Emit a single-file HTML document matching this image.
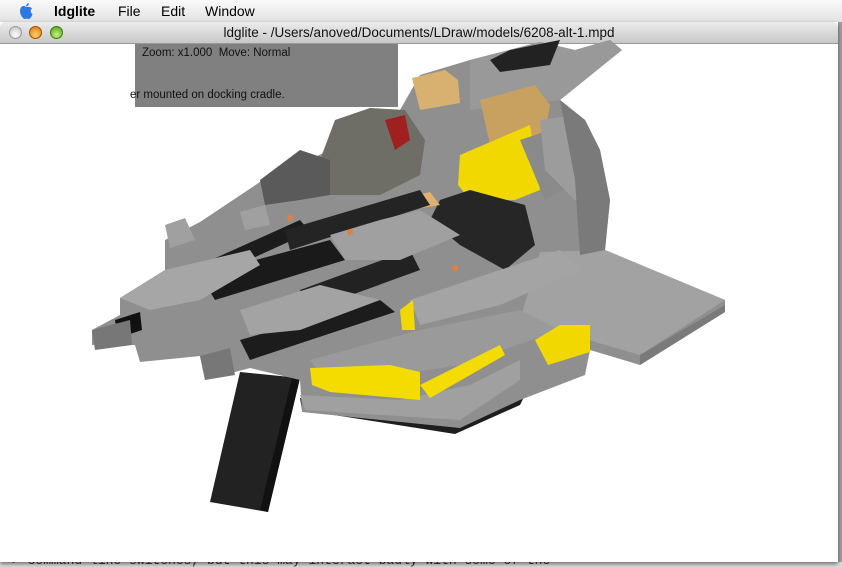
<!DOCTYPE html>
<html><head><meta charset="utf-8"><style>
body{margin:0;width:842px;height:567px;overflow:hidden;background:#d8d8d8;font-family:"Liberation Sans",sans-serif;position:relative}
#menu{position:absolute;left:0;top:0;width:842px;height:22px;background:linear-gradient(#fafafa,#e2e2e2);font-size:14px;color:#000}
#menu span{position:absolute;top:3px}
#rside{position:absolute;left:838px;top:22px;width:4px;height:545px;background:#a0a0a0}
#win{position:absolute;left:0;top:22px;width:838px;height:540px;background:#fff;box-shadow:0 2px 4px rgba(0,0,0,.5)}
#title{position:absolute;left:0;top:0;width:838px;height:21px;background:linear-gradient(#ececec,#c8c8c8);border-bottom:1px solid #999;border-radius:5px 5px 0 0;font-size:13.5px;text-align:center;line-height:22px;color:#111}
.b{position:absolute;top:4px;width:13px;height:13px;border-radius:50%}
#panel{position:absolute;left:135px;top:22px;width:263px;height:63px;background:#808080;font-size:11.5px;color:#111}
#bot{position:absolute;left:0;top:562px;width:842px;height:5px;overflow:hidden;background:#ddd}
#bot div{position:absolute;top:-9px;left:12px;font-family:"Liberation Mono",monospace;font-size:13px;color:#333}
</style></head><body>
<div id="menu">
<svg style="position:absolute;left:18px;top:2px" width="16" height="18" viewBox="0 0 16 18"><path d="M8 5C6 3 2 4 2 9c0 4 3 8 5 8 1 0 1-.5 1.5-.5S9.5 17 10.5 17c2 0 3.5-3 4-5-2-1-2.5-4-.5-5.5C13 5 11 4.5 8 5z" fill="#2a7ae2"/><path d="M8 4.5C8 3 9 1.5 11 1c0 2-1.5 3.5-3 3.5z" fill="#2a7ae2"/></svg>
<span style="left:54px;font-weight:bold">ldglite</span><span style="left:118px">File</span><span style="left:161px">Edit</span><span style="left:205px">Window</span></div>
<div id="rside"></div>
<div id="bot"><div>&gt; command line switches, but this may interact badly with some of the</div></div>
<div id="win">
<div id="title">ldglite - /Users/anoved/Documents/LDraw/models/6208-alt-1.mpd
<div class="b" style="left:9px;background:radial-gradient(circle at 50% 70%,#fff,#bbb);border:1px solid #999;width:11px;height:11px"></div>
<div class="b" style="left:29px;background:radial-gradient(circle at 50% 70%,#ffd070,#e07000);border:1px solid #a05000;width:11px;height:11px"></div>
<div class="b" style="left:50px;background:radial-gradient(circle at 50% 70%,#c8f080,#48a010);border:1px solid #3a7a10;width:11px;height:11px"></div>
</div>
<div id="panel"><div style="position:absolute;left:7px;top:3px">Zoom: x1.000 &nbsp;Move: Normal</div><div style="position:absolute;left:-5px;top:45px">er mounted on docking cradle.</div></div>
<svg style="position:absolute;left:0;top:-22px" width="842" height="567">
<polygon points="240,372 300,378 268,512 210,502" fill="#222"/>
<polygon points="292,378 300,378 268,512 260,510" fill="#111"/>
<polygon points="300,398 460,425 525,395 520,405 455,434 302,410" fill="#1e1e1e"/>
<polygon points="92,345 92,330 120,315 120,298 165,270 165,240 200,222 260,182 330,150 400,110 420,75 470,60 540,42 575,50 610,40 622,50 560,100 585,120 600,150 610,200 605,250 725,300 725,312 640,365 590,350 585,375 520,400 460,428 302,412 300,380 250,368 205,380 200,356 140,362 135,345" fill="#8f8f8f"/>
<polygon points="540,252 605,250 725,300 640,355 520,320" fill="#a2a2a2"/>
<polygon points="640,355 725,305 725,312 640,365" fill="#7a7a7a"/>
<polygon points="470,60 540,42 575,50 610,40 622,50 560,100 470,110" fill="#999"/>
<polygon points="490,60 510,50 560,40 550,65 500,72" fill="#222"/>
<polygon points="412,78 445,70 458,80 460,103 420,110" fill="#d8b070"/>
<polygon points="480,100 535,85 550,105 545,135 490,145" fill="#c8a060"/>
<polygon points="335,120 370,108 405,110 425,140 420,175 380,195 330,195 320,160" fill="#6e6e66"/>
<polygon points="385,120 405,115 410,140 395,150" fill="#a02020"/>
<polygon points="260,180 300,150 330,160 330,195 300,200 265,205" fill="#5a5a5a"/>
<polygon points="460,155 530,125 540,190 515,200 470,200 458,185" fill="#f0d800"/>
<polygon points="520,140 550,130 580,180 545,200" fill="#8a8a8a"/>
<polygon points="540,120 575,115 600,150 605,195 575,200 545,170" fill="#9c9c9c"/>
<polygon points="440,200 470,190 525,205 535,245 505,270 460,245 430,220" fill="#262626"/>
<polygon points="405,198 430,192 440,205 410,210" fill="#e0b070"/>
<polygon points="200,265 300,220 310,232 205,280" fill="#1c1c1c"/>
<polygon points="285,230 420,190 430,205 290,250" fill="#242424"/>
<polygon points="200,275 330,240 345,260 215,300" fill="#1a1a1a"/>
<polygon points="300,290 410,250 420,270 310,310" fill="#222"/>
<polygon points="240,340 380,300 395,312 250,360" fill="#1c1c1c"/>
<polygon points="115,320 140,312 142,330 118,338" fill="#111"/>
<polygon points="120,298 165,270 250,250 260,265 200,300 150,310" fill="#a6a6a6"/>
<polygon points="165,225 185,218 195,240 170,248" fill="#a0a0a0"/>
<polygon points="240,212 265,205 270,225 245,230" fill="#a0a0a0"/>
<polygon points="330,235 380,220 420,210 460,235 400,260 345,260" fill="#a0a0a0"/>
<polygon points="410,300 500,270 560,250 580,270 500,305 420,325" fill="#a4a4a4"/>
<polygon points="240,310 320,285 380,300 300,330 250,335" fill="#a3a3a3"/>
<polygon points="310,360 420,330 520,310 560,330 460,365 330,385" fill="#9a9a9a"/>
<polygon points="300,395 400,400 470,385 520,360 520,380 460,420 305,410" fill="#a0a0a0"/>
<polygon points="92,330 130,320 132,345 95,350" fill="#777"/>
<polygon points="200,356 230,348 235,375 205,380" fill="#777"/>
<polygon points="560,100 585,120 600,150 610,200 605,250 580,255 575,180" fill="#7a7a7a"/>
<polygon points="310,368 390,365 420,372 420,400 330,392 312,385" fill="#f4dc00"/>
<polygon points="420,385 500,345 505,355 430,398" fill="#f4dc00"/>
<polygon points="535,340 560,325 590,325 590,352 548,365" fill="#f0d800"/>
<polygon points="400,310 413,300 415,330 402,330" fill="#f0d800"/>
<circle cx="290" cy="218" r="3" fill="#e08040"/><circle cx="350" cy="232" r="3" fill="#e08040"/><circle cx="455" cy="268" r="3" fill="#e08040"/>
</svg>
</div>
</body></html>
